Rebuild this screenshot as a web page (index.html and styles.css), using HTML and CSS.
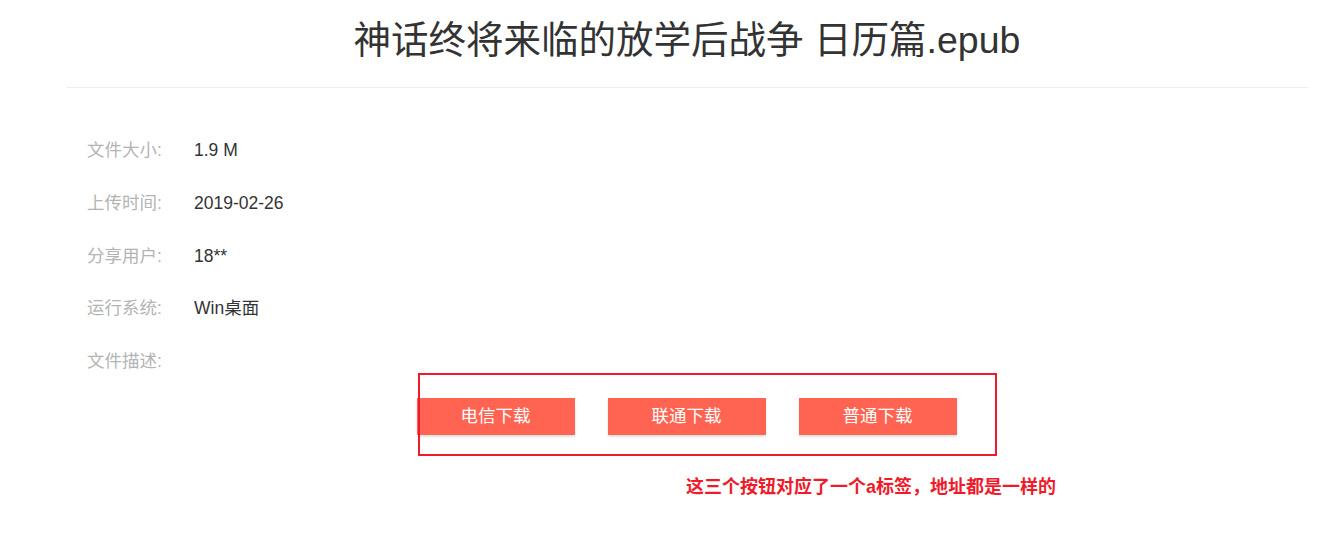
FILE: index.html
```html
<!DOCTYPE html>
<html lang="zh-CN">
<head>
<meta charset="utf-8">
<title>神话终将来临的放学后战争 日历篇.epub</title>
<link rel="stylesheet" href="styles.css">
</head>
<body>
<div class="page">
  <h1 class="title">神话终将来临的放学后战争 日历篇.epub</h1>
  <div class="info">
    <div class="row"><span class="label">文件大小:</span><span class="value">1.9 M</span></div>
    <div class="row"><span class="label">上传时间:</span><span class="value">2019-02-26</span></div>
    <div class="row"><span class="label">分享用户:</span><span class="value">18**</span></div>
    <div class="row"><span class="label">运行系统:</span><span class="value">Win桌面</span></div>
    <div class="row"><span class="label">文件描述:</span><span class="value"></span></div>
  </div>
  <div class="downloads">
    <a class="btn" href="#">电信下载</a>
    <a class="btn" href="#">联通下载</a>
    <a class="btn" href="#">普通下载</a>
    <div class="mark"></div>
    <div class="note">这三个按钮对应了一个a标签，地址都是一样的</div>
  </div>
</div>
</body>
</html>
```
FILE: styles.css
```css
* { box-sizing: border-box; }
html, body { margin: 0; padding: 0; background: #fff; }
body {
  font-family: "Liberation Sans", Arial, "Noto Sans CJK SC", sans-serif;
  color: #333;
}
.page {
  width: 1242px;
  margin-left: 66px;
  padding-bottom: 130px;
}
.title {
  margin: 0;
  padding-top: 14px;
  height: 88px;
  font-size: 37.5px;
  line-height: 52px;
  font-weight: normal;
  text-align: center;
  color: #333;
  border-bottom: 1px solid #eeeeee;
}
.info {
  padding-top: 36px;
  padding-left: 21px;
}
.row {
  display: flex;
  height: 52.8px;
  line-height: 52.8px;
  font-size: 17.5px;
}
.label {
  width: 107px;
  color: #b4b4b4;
}
.value { color: #333; }
.downloads {
  position: relative;
  display: flex;
  justify-content: center;
  gap: 33px;
  margin-top: 10px;
  padding-right: 1px;
}
.btn {
  display: block;
  width: 158px;
  height: 37px;
  line-height: 37px;
  text-align: center;
  background: #ff6452;
  color: #fff;
  font-size: 17.5px;
  text-decoration: none;
  box-shadow: 0 2px 2px rgba(0,0,0,0.12);
}
.mark {
  position: absolute;
  left: 352px;
  top: -25px;
  width: 579px;
  height: 83px;
  border: 2px solid #ef1b2b;
}
.note {
  position: absolute;
  left: 620px;
  top: 77px;
  font-size: 18px;
  line-height: 24px;
  font-weight: bold;
  color: #ef1b2b;
  white-space: nowrap;
}
```
